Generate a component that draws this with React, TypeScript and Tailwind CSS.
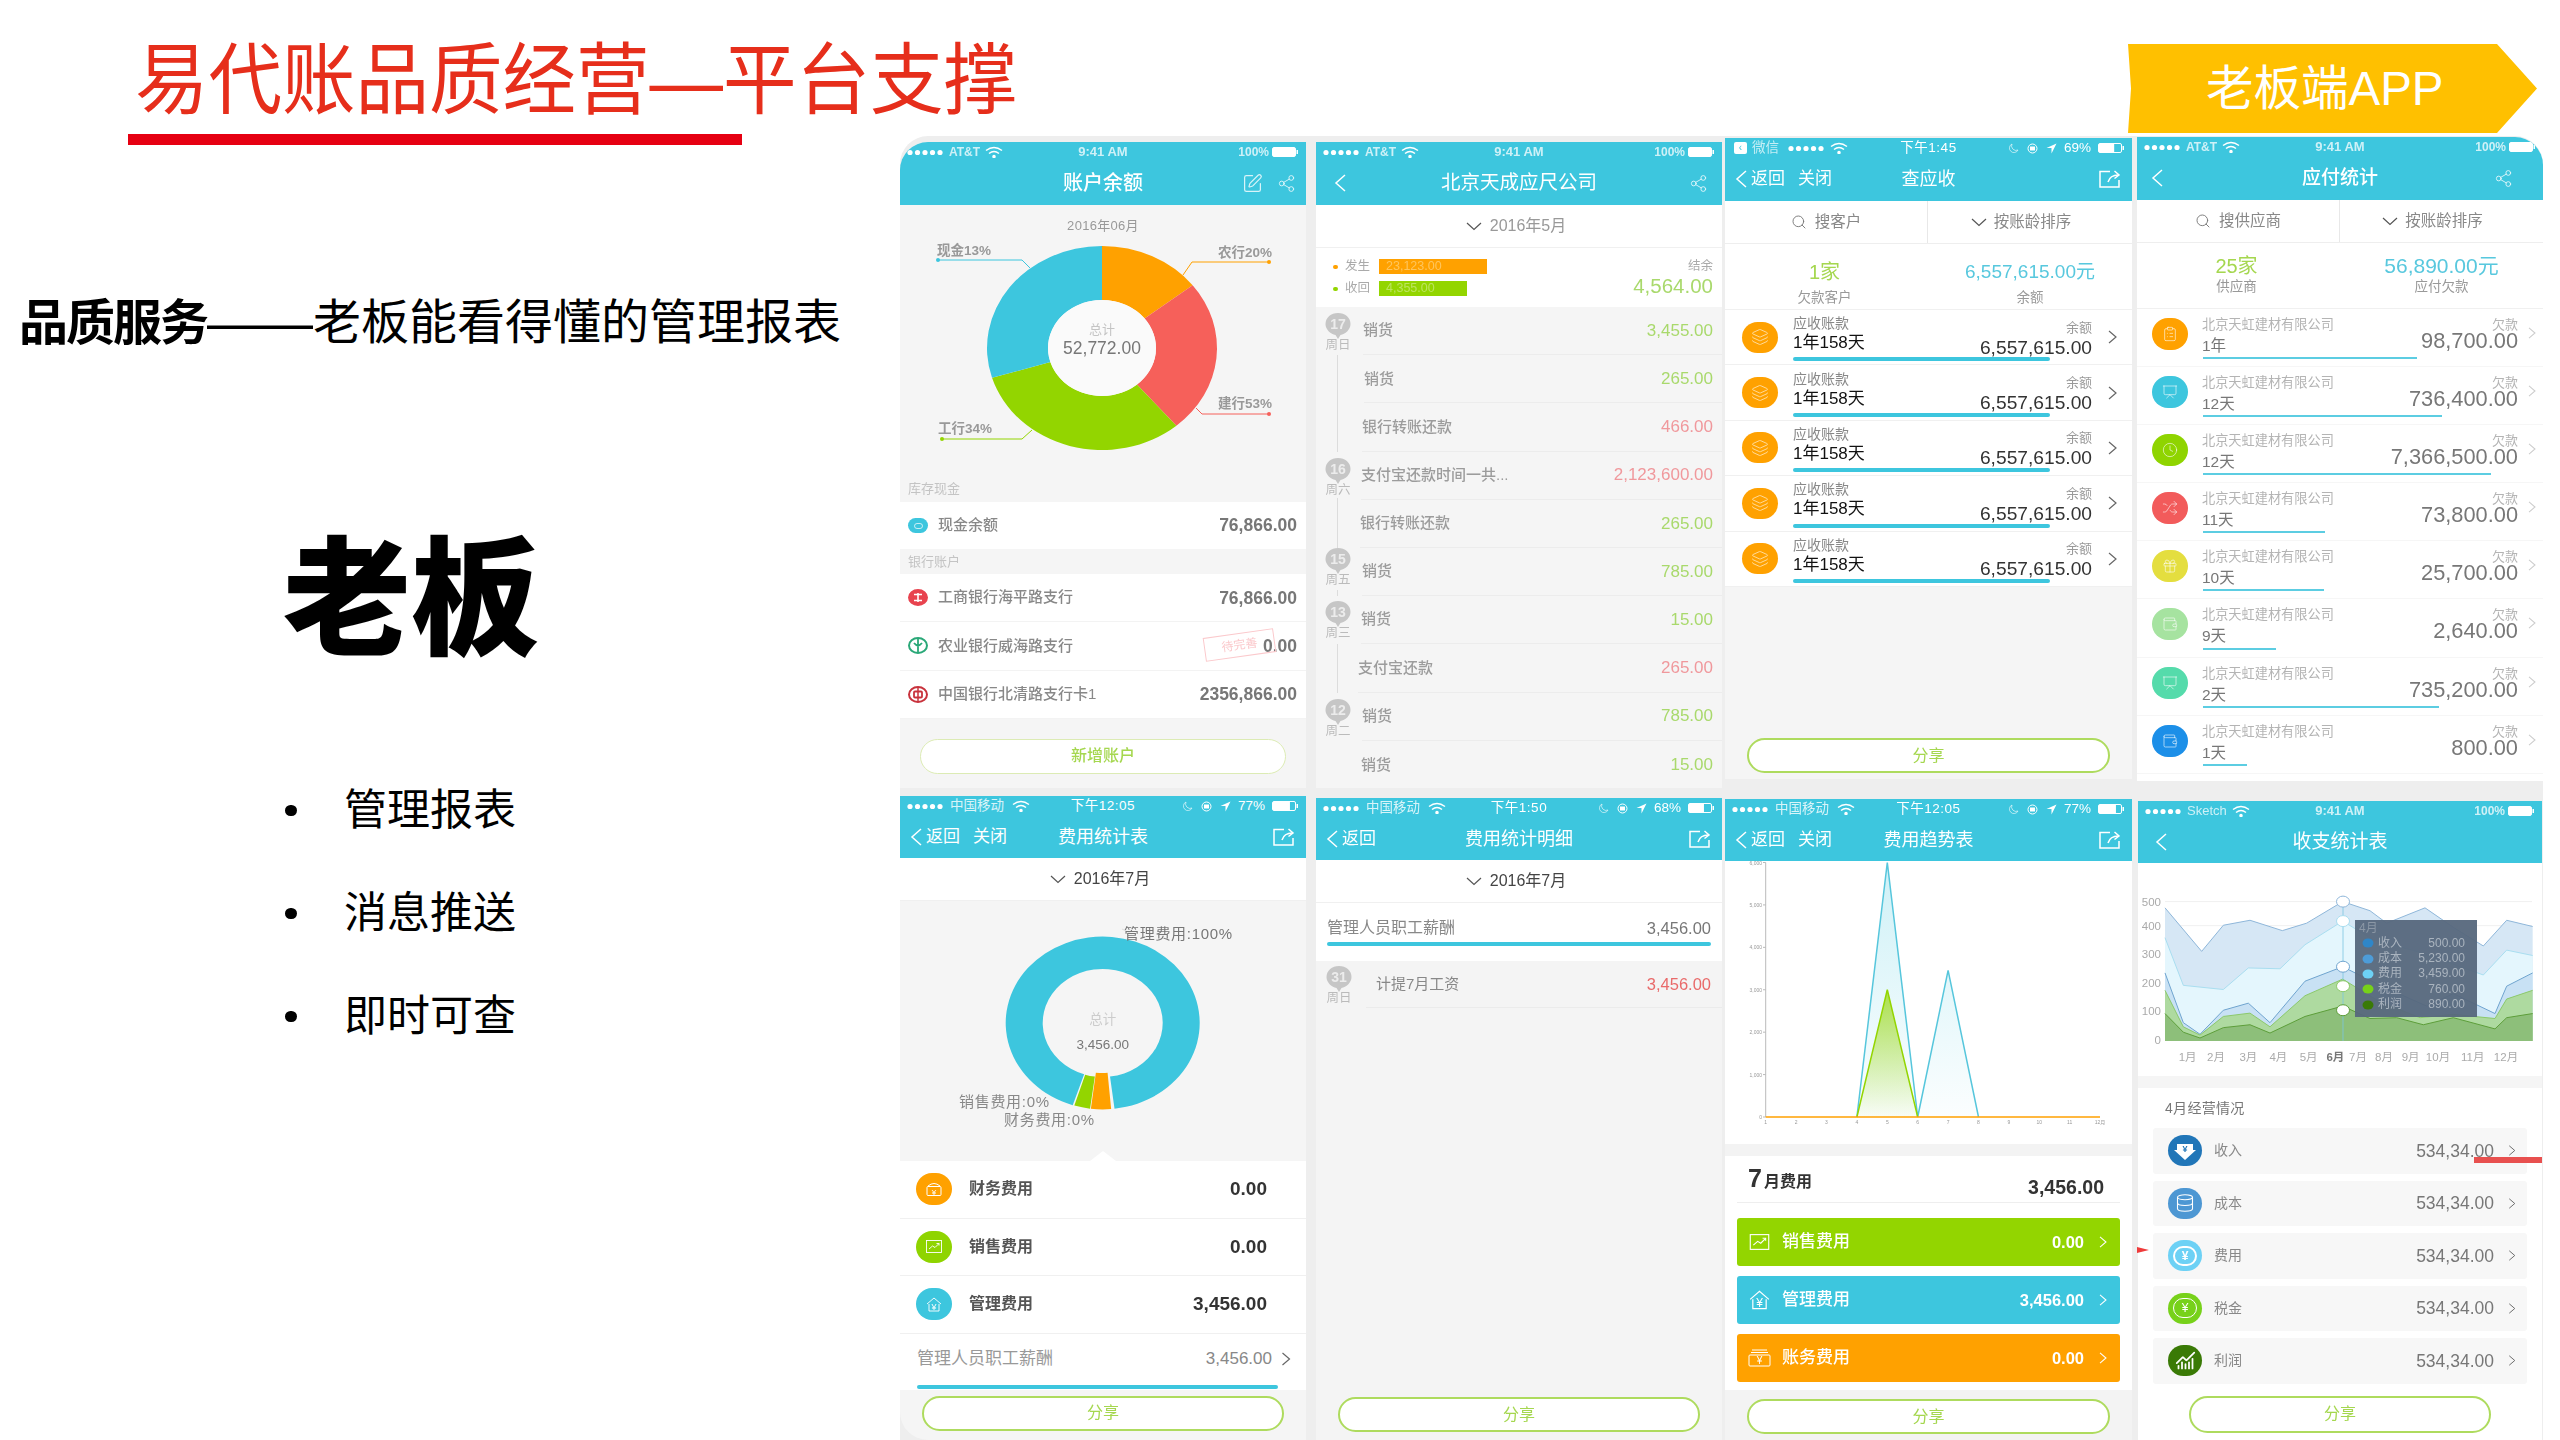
import React from "react";
import { Layers, ClipboardList, Presentation, Clock, Shuffle, Gift, Wallet, Share2, SquarePen, Search, Database, ChartNoAxesCombined } from "lucide-react";

const TEAL = "#3dc6de";

function pt(cx: number, cy: number, rx: number, ry: number, a: number) {
  const r = (a * Math.PI) / 180;
  return [cx + rx * Math.sin(r), cy - ry * Math.cos(r)];
}
function seg(cx: number, cy: number, rx: number, ry: number, ix: number, iy: number, a0: number, a1: number) {
  const l = a1 - a0 > 180 ? 1 : 0;
  const [x0, y0] = pt(cx, cy, rx, ry, a0);
  const [x1, y1] = pt(cx, cy, rx, ry, a1);
  const [x2, y2] = pt(cx, cy, ix, iy, a1);
  const [x3, y3] = pt(cx, cy, ix, iy, a0);
  return `M${x0} ${y0}A${rx} ${ry} 0 ${l} 1 ${x1} ${y1}L${x2} ${y2}A${ix} ${iy} 0 ${l} 0 ${x3} ${y3}Z`;
}

function Dots() {
  return (
    <svg width="37" height="7" viewBox="0 0 37 7" className="shrink-0">
      {[3, 10.5, 18, 25.5, 33].map((x) => (
        <circle key={x} cx={x} cy="3.5" r="2.6" fill="#fff" />
      ))}
    </svg>
  );
}
function Wifi() {
  return (
    <svg width="18" height="12" viewBox="0 0 18 12" fill="none" stroke="#fff" strokeWidth="1.5" className="shrink-0">
      <path d="M1 4.5Q9 -1.5 17 4.5" />
      <path d="M4 7.5Q9 3.5 14 7.5" />
      <circle cx="9" cy="10.5" r="1" fill="#fff" />
    </svg>
  );
}
function Battery({ pct }: { pct: number }) {
  return (
    <svg width="27" height="10" viewBox="0 0 27 10" className="shrink-0">
      <rect x="0.5" y="0.5" width="23" height="9" rx="1.5" fill="none" stroke="#fff" />
      <rect x="1" y="1" width={22 * pct} height="8" fill="#fff" />
      <rect x="24.5" y="3" width="1.5" height="4" fill="#fff" />
    </svg>
  );
}
function CnRight({ pct, bat }: { pct: string; bat: number }) {
  return (
    <div className="flex items-center justify-end gap-[7px]">
      <svg width="10" height="10" viewBox="0 0 10 10" className="shrink-0"><path d="M3 1A4.5 4.5 0 1 0 9 7 4.5 4.5 0 0 1 3 1Z" fill="none" stroke="#ffffff" strokeOpacity="0.6" /></svg>
      <svg width="13" height="11" viewBox="0 0 13 11" fill="none" stroke="#fff" className="shrink-0"><circle cx="6.5" cy="5.5" r="4.5" /><rect x="4.5" y="4" width="4" height="3" fill="#fff" /></svg>
      <svg width="11" height="11" viewBox="0 0 11 11" className="shrink-0"><path d="M10.5 .5L0.5 5H5.5V10.5Z" fill="#fff" /></svg>
      <span>{pct}</span>
      <Battery pct={bat} />
    </div>
  );
}
function Status({ left, time, right, big }: { left: React.ReactNode; time: string; right: React.ReactNode; big?: boolean }) {
  return (
    <div className={`grid h-[20px] grid-cols-[1fr_auto_1fr] items-center px-[7px] text-white ${big ? "text-[13.5px]" : "text-[12px] font-bold text-white/75"}`}>
      <div className="flex items-center gap-[5px]">{left}</div>
      <div className={big ? "tracking-[0.5px]" : "text-[13px]"}>{time}</div>
      {right}
    </div>
  );
}
function AttRight() {
  return (
    <div className="flex items-center justify-end gap-[3px]">
      <span>100%</span>
      <Battery pct={1} />
    </div>
  );
}
function Back() {
  return (
    <svg width="13" height="20" viewBox="0 0 13 20" fill="none" stroke="#fff" strokeWidth="1.5" className="shrink-0">
      <path d="M11 2L2 10L11 18" />
    </svg>
  );
}
function ShareBox() {
  return (
    <svg width="22" height="18" viewBox="0 0 22 18" fill="none" stroke="#fff" strokeWidth="1.5" className="mr-[1px]">
      <path d="M11 1.5H1V17H20V10" />
      <path d="M9 12Q11 5 19.5 5" />
      <path d="M15.5 1L20 5L15.5 8.5" />
    </svg>
  );
}
function Nav({ title, left, right, size, gap }: { title: string; left?: React.ReactNode; right?: React.ReactNode; size?: string; gap?: string }) {
  return (
    <div className={`grid h-[42px] grid-cols-[1fr_auto_1fr] items-center px-[10px] text-white ${size ?? "text-[18px]"}`}>
      <div className="flex items-center text-[17px]">{left}</div>
      <div>{title}</div>
      <div className={`flex items-center justify-end ${gap ?? "gap-[10px]"}`}>{right}</div>
    </div>
  );
}
function BackClose({ close }: { close?: boolean }) {
  return (
    <>
      <Back />
      <span className="ml-[3px]">返回</span>
      {close ? <span className="ml-[13px]">关闭</span> : null}
    </>
  );
}
function Chev({ color = "#777", w = 9, h = 14, sw = 1.2 }: { color?: string; w?: number; h?: number; sw?: number }) {
  return (
    <svg width={w} height={h} viewBox="0 0 9 14" fill="none" stroke={color} strokeWidth={sw} className="shrink-0">
      <path d="M1 1L8 7L1 13" />
    </svg>
  );
}
function ChevDown() {
  return (
    <svg width="16" height="9" viewBox="0 0 16 9" fill="none" stroke="#555" strokeWidth="1.2" className="shrink-0">
      <path d="M1 1L8 7.5L15 1" />
    </svg>
  );
}
function DateRow({ text, cls }: { text: string; cls?: string }) {
  return (
    <div className={`flex h-[43px] shrink-0 items-center justify-center gap-[8px] border-b border-[#f0f0f0] bg-white pr-[6px] text-[16px] ${cls ?? "text-[#444]"}`}>
      <ChevDown />
      <span>{text}</span>
    </div>
  );
}
function ShareBtn({ cls }: { cls: string }) {
  return (
    <div className={`flex h-[35px] items-center justify-center rounded-full border-2 border-[#aedb5e] bg-white text-[16px] text-[#a5d74f] ${cls}`}>分享</div>
  );
}

/* ---------- phone 1 ---------- */
function Bank({ kind }: { kind: number }) {
  const c = kind === 0 ? "#e8434f" : kind === 1 ? "#2aa878" : "#c8323c";
  return (
    <svg width="20" height="17" viewBox="0 0 20 17" className="shrink-0">
      <ellipse cx="10" cy="8.5" rx="9" ry="7.5" fill={kind === 0 ? c : "none"} stroke={c} strokeWidth="2" />
      {kind === 0 ? <path d="M6 5.5H14M6 11.5H14M10 4V13" stroke="#fff" strokeWidth="1.6" /> : null}
      {kind === 1 ? <path d="M10 2V15M6 6Q10 11 14 6" stroke={c} strokeWidth="1.8" fill="none" /> : null}
      {kind === 2 ? <rect x="6" y="5.5" width="8" height="6" rx="1" fill="none" stroke={c} strokeWidth="1.8" /> : null}
      {kind === 2 ? <path d="M10 2V15" stroke={c} strokeWidth="1.5" /> : null}
    </svg>
  );
}
function BankRow({ icon, label, amount, stamp }: { icon: React.ReactNode; label: string; amount: string; stamp?: boolean }) {
  return (
    <div className="relative flex h-[48.3px] items-center border-b border-[#f3f3f3] pl-[8px] pr-[9px]">
      <div className="flex w-[30px] shrink-0">{icon}</div>
      <span className="text-[15px] font-medium text-[#888]">{label}</span>
      <span className="ml-auto text-[17.5px] font-bold text-[#777]">{amount}</span>
      {stamp ? (
        <div className="absolute left-[304px] top-[11px] flex h-[24px] w-[71px] -rotate-[8deg] items-center justify-center border border-[#fbc9cc] text-[12px] text-[#fbc9cc]">待完善</div>
      ) : null}
    </div>
  );
}
function Phone1() {
  const cx = 202;
  const cy = 103;
  const L = "#999";
  return (
    <div className="flex h-[646px] w-[406px] flex-col overflow-hidden rounded-tl-[28px] bg-[#f5f5f5] blur-[0.7px]">
      <div className="h-[63px] shrink-0 bg-[#3dc6de]">
        <Status left={<><Dots /><span>AT&amp;T</span><Wifi /></>} time="9:41 AM" right={<AttRight />} />
        <Nav title="账户余额" size="text-[20px] font-medium" gap="gap-[14px]" right={<><SquarePen size={21} strokeWidth={1.4} color="#ffffffcc" /><Share2 size={19} strokeWidth={1.2} color="#ffffffcc" /></>} />
      </div>
      <div className="flex h-[34px] shrink-0 items-center justify-center pt-[8px] text-[13px] tracking-[0.3px] text-[#999]">2016年06月</div>
      <svg width="406" height="243" viewBox="0 -6 406 243" className="shrink-0">
        <path d={seg(cx, cy, 115, 102, 54, 48, 0, 52)} fill="#ffa100" />
        <path d={seg(cx, cy, 115, 102, 54, 48, 52, 139.7)} fill="#f6605a" />
        <path d={seg(cx, cy, 115, 102, 54, 48, 139.7, 253)} fill="#93d500" />
        <path d={seg(cx, cy, 115, 102, 54, 48, 253, 360)} fill={TEAL} />
        <ellipse cx={cx} cy={cy} rx="54" ry="48" fill="#fafafa" />
        <text x={cx} y="89" textAnchor="middle" fontSize="13" fill="#c4c4c4">总计</text>
        <text x={cx} y="109" textAnchor="middle" fontSize="17.5" fill="#777">52,772.00</text>
        <text x="37" y="10" fontSize="13.5" fill={L} fontWeight="600">现金13%</text>
        <text x="318" y="12" fontSize="13.5" fill={L} fontWeight="600">农行20%</text>
        <text x="318" y="163" fontSize="13.5" fill={L} fontWeight="600">建行53%</text>
        <text x="38" y="188" fontSize="13.5" fill={L} fontWeight="600">工行34%</text>
        <path d="M38 15H122L130 23" fill="none" stroke={TEAL} />
        <circle cx="38" cy="15" r="2" fill={TEAL} />
        <path d="M369 17H292L283 30" fill="none" stroke="#ffa100" />
        <circle cx="369" cy="17" r="2" fill="#ffa100" />
        <path d="M369 169H302L296 163" fill="none" stroke="#f6605a" />
        <circle cx="369" cy="169" r="2" fill="#f6605a" />
        <path d="M42 194H122L132 185" fill="none" stroke="#93d500" />
        <circle cx="42" cy="194" r="2" fill="#93d500" />
      </svg>
      <div className="flex h-[20px] shrink-0 items-start pl-[8px] text-[13px] leading-[13px] text-[#c4c4c4]">库存现金</div>
      <div className="flex h-[47px] shrink-0 items-center bg-white pl-[8px] pr-[9px]">
        <div className="flex w-[30px] shrink-0"><div className="flex h-[15px] w-[20px] items-center justify-center rounded-full bg-[#3dc6de]"><div className="h-[6px] w-[9px] rounded-full border border-white/70" /></div></div>
        <span className="text-[15px] font-medium text-[#888]">现金余额</span>
        <span className="ml-auto text-[17.5px] font-bold text-[#777]">76,866.00</span>
      </div>
      <div className="flex h-[25px] shrink-0 items-center pl-[8px] text-[13px] text-[#c4c4c4]">银行账户</div>
      <div className="shrink-0 bg-white">
        <BankRow icon={<Bank kind={0} />} label="工商银行海平路支行" amount="76,866.00" />
        <BankRow icon={<Bank kind={1} />} label="农业银行威海路支行" amount="0.00" stamp />
        <BankRow icon={<Bank kind={2} />} label="中国银行北清路支行卡1" amount="2356,866.00" />
      </div>
      <div className="ml-[20px] mt-[20px] flex h-[35px] w-[366px] items-center justify-center rounded-full border border-[#dcebb4] bg-white text-[16px] font-medium text-[#a5d74f]">新增账户</div>
    </div>
  );
}

/* ---------- phone 2 ---------- */
function Pin({ n, day, top }: { n: string; day: string; top: string }) {
  return (
    <div className={`absolute left-[9px] flex w-[26px] flex-col items-center ${top}`}>
      <svg width="26" height="28" viewBox="0 0 26 28">
        <path d="M13 1C20 1 25.5 5.5 25.5 12C25.5 18 20 22 15.5 23L13 27L10.5 23C6 22 0.5 18 0.5 12C0.5 5.5 6 1 13 1Z" fill="#c6c6c6" />
        <text x="13" y="17" textAnchor="middle" fontSize="14" fontWeight="700" fill="#ececec">{n}</text>
      </svg>
      <span className="-mt-[2px] text-[12.5px] leading-[14px] text-[#bbb]">{day}</span>
    </div>
  );
}
const G2 = "text-[#a9d96c]";
const R2 = "text-[#f0989c]";
const rows2: { t: string; a: string; c: string; pin?: [string, string]; top?: string; line?: string; pl: string }[] = [
  { t: "销货", a: "3,455.00", c: G2, pin: ["17", "周日"], top: "top-[5px]", line: "top-[48px] h-[2px]", pl: "pl-[47px]" },
  { t: "销货", a: "265.00", c: G2, line: "top-0 h-full", pl: "pl-[48px]" },
  { t: "银行转账还款", a: "466.00", c: R2, line: "top-0 h-full", pl: "pl-[46px]" },
  { t: "支付宝还款时间一共...", a: "2,123,600.00", c: R2, pin: ["16", "周六"], top: "top-[5px]", line: "top-[46px] h-[3px]", pl: "pl-[45px]" },
  { t: "银行转账还款", a: "265.00", c: G2, line: "top-0 h-full", pl: "pl-[44px]" },
  { t: "销货", a: "785.00", c: G2, pin: ["15", "周五"], top: "-top-[1px]", line: "top-[42px] h-[6px]", pl: "pl-[46px]" },
  { t: "销货", a: "15.00", c: G2, pin: ["13", "周三"], top: "top-[4px]", pl: "pl-[45px]" },
  { t: "支付宝还款", a: "265.00", c: R2, line: "top-0 h-full", pl: "pl-[42px]" },
  { t: "销货", a: "785.00", c: G2, pin: ["12", "周二"], top: "top-[5px]", pl: "pl-[46px]" },
  { t: "销货", a: "15.00", c: G2, pl: "pl-[45px]" },
];
function Phone2() {
  return (
    <div className="ml-[10px] flex h-[646px] w-[406px] flex-col overflow-hidden bg-[#f5f5f5] blur-[0.7px]">
      <div className="h-[63px] shrink-0 bg-[#3dc6de]">
        <Status left={<><Dots /><span>AT&amp;T</span><Wifi /></>} time="9:41 AM" right={<AttRight />} />
        <Nav title="北京天成应尺公司" size="text-[19.5px]" left={<div className="ml-[8px]"><Back /></div>} right={<div className="mr-[4px] flex"><Share2 size={19} strokeWidth={1.2} color="#ffffffcc" /></div>} />
      </div>
      <DateRow text="2016年5月" cls="text-[#999]" />
      <div className="flex h-[59px] shrink-0 items-center justify-between bg-white pl-[17px] pr-[9px]">
        <div className="flex flex-col gap-[7px] text-[12.5px] leading-[15px] text-[#aaa]">
          {[
            { l: "发生", v: "23,123.00", b: "w-[108px] bg-[#ffa100] text-[#ffc55c]", d: "bg-[#ffa100]" },
            { l: "收回", v: "4,355.00", b: "w-[88px] bg-[#93d500] text-[#bce45f]", d: "bg-[#93d500]" },
          ].map((r) => (
            <div key={r.l} className="flex items-center">
              <div className={`h-[4px] w-[5px] rounded-full ${r.d}`} />
              <span className="ml-[7px] w-[34px]">{r.l}</span>
              <div className={`h-[15px] pl-[7px] text-[12.5px] leading-[15px] ${r.b}`}>{r.v}</div>
            </div>
          ))}
        </div>
        <div className="flex flex-col items-end">
          <span className="text-[12.5px] leading-[16px] text-[#aaa]">结余</span>
          <span className="text-[20.5px] leading-[24px] text-[#a9d96c]">4,564.00</span>
        </div>
      </div>
      <div className="flex-1">
        {rows2.map((r, i) => (
          <div key={i} className={`relative h-[48.2px] ${r.pl}`}>
            {r.line ? <div className={`absolute left-[21px] w-px bg-[#dcdcdc] ${r.line}`} /> : null}
            {r.pin ? <Pin n={r.pin[0]} day={r.pin[1]} top={r.top ?? ""} /> : null}
            <div className={`flex h-full items-center justify-between border-b border-[#ececec] pr-[9px] ${i === rows2.length - 1 ? "border-b-0" : ""}`}>
              <span className="text-[15px] font-medium text-[#9c9c9c]">{r.t}</span>
              <span className={`text-[17px] ${r.c}`}>{r.a}</span>
            </div>
          </div>
        ))}
      </div>
    </div>
  );
}

/* ---------- search + summary rows ---------- */
function SearchRow({ s }: { s: string }) {
  return (
    <div className="flex h-[43px] shrink-0 border-b border-[#eee] bg-white text-[15.5px] text-[#888]">
      <div className="flex w-[203px] items-center justify-center gap-[8px] border-r border-[#e8e8e8]">
        <Search size={16} strokeWidth={1.4} color="#777" />
        <span>{s}</span>
      </div>
      <div className="flex flex-1 items-center justify-center gap-[7px] pr-[18px]">
        <ChevDown />
        <span>按账龄排序</span>
      </div>
    </div>
  );
}
function Summary({ a, b, la, lb, pad, gap, size }: { a: string; b: string; la: string; lb: string; pad: string; gap: string; size?: string }) {
  return (
    <div className={`grid h-[66px] shrink-0 grid-cols-[203px_1fr] items-start border-b border-[#f0f0f0] bg-white ${pad}`}>
      <div className="flex flex-col items-center pr-[4px]">
        <span className="text-[20px] leading-[26px] text-[#a5d74f]">{a}</span>
        <span className={`text-[13.5px] leading-[16px] text-[#999] ${gap}`}>{la}</span>
      </div>
      <div className="flex flex-col items-center">
        <span className={`${size ?? "text-[19px]"} leading-[26px] text-[#58c8de]`}>{b}</span>
        <span className={`text-[13.5px] leading-[16px] text-[#999] ${gap}`}>{lb}</span>
      </div>
    </div>
  );
}

/* ---------- phone 3 ---------- */
function Phone3() {
  return (
    <div className="ml-[3px] -mt-[4px] flex h-[641px] w-[407px] flex-col overflow-hidden bg-[#f5f5f5] blur-[0.4px]">
      <div className="h-[63px] shrink-0 bg-[#3dc6de]">
        <Status
          big
          left={<><div className="ml-[2px] flex h-[12px] w-[13px] items-center justify-center rounded-[2px] bg-white text-[10px] leading-none text-[#3dc6de]">‹</div><span className="text-white/70">微信</span><div className="ml-[4px]"><Dots /></div><Wifi /></>}
          time="下午1:45"
          right={<CnRight pct="69%" bat={0.69} />}
        />
        <Nav title="查应收" left={<BackClose close />} right={<ShareBox />} />
      </div>
      <SearchRow s="搜客户" />
      <Summary a="1家" b="6,557,615.00元" la="欠款客户" lb="余额" pad="pt-[15px]" gap="mt-[5px]" />
      {[0, 1, 2, 3, 4].map((i) => (
        <div key={i} className="relative h-[55.4px] shrink-0 border-b border-[#f0f0f0] bg-white">
          <div className="flex h-full items-center pl-[17px] pr-[15px]">
            <div className="flex h-[31px] w-[36px] shrink-0 items-center justify-center rounded-full bg-[#ffa100]"><Layers size={18} strokeWidth={1.2} color="#ffe0a8" /></div>
            <div className="ml-[15px] flex flex-col pb-[7px]">
              <span className="text-[14px] leading-[19px] text-[#888]">应收账款</span>
              <span className="text-[17px] leading-[20px] text-[#111]">1年158天</span>
            </div>
            <div className="ml-auto flex flex-col items-end pr-[16px] pt-[2px]">
              <span className="text-[13px] leading-[18px] text-[#999]">余额</span>
              <span className="text-[19.2px] leading-[21px] text-[#333]">6,557,615.00</span>
            </div>
            <Chev color="#666" />
          </div>
          <div className="absolute bottom-[3px] left-[68px] h-[4px] w-[257px] rounded-full bg-[#3dc6de]" />
        </div>
      ))}
      <div className="mt-auto flex flex-col">
        <ShareBtn cls="mx-[22px] mb-[6px]" />
      </div>
    </div>
  );
}

/* ---------- phone 4 ---------- */
const rows4 = [
  { c: "bg-[#ffa100]", I: ClipboardList, d: "1年", a: "98,700.00", w: "w-[214px]" },
  { c: "bg-[#3dc6de]", I: Presentation, d: "12天", a: "736,400.00", w: "w-[239px]" },
  { c: "bg-[#8fd400]", I: Clock, d: "12天", a: "7,366,500.00", w: "w-[288px]" },
  { c: "bg-[#f25b5b]", I: Shuffle, d: "11天", a: "73,800.00", w: "w-[122px]" },
  { c: "bg-[#e4de3f]", I: Gift, d: "10天", a: "25,700.00", w: "w-[121px]" },
  { c: "bg-[#a6e3a0]", I: Wallet, d: "9天", a: "2,640.00", w: "w-[73px]" },
  { c: "bg-[#55dbab]", I: Presentation, d: "2天", a: "735,200.00", w: "w-[236px]" },
  { c: "bg-[#1c8fe8]", I: Wallet, d: "1天", a: "800.00", w: "w-[44px]" },
];
function Phone4() {
  return (
    <div className="ml-[5px] -mt-[5px] flex h-[644px] w-[406px] flex-col overflow-hidden rounded-tr-[28px] bg-white blur-[0.7px]">
      <div className="h-[63px] shrink-0 bg-[#3dc6de]">
        <Status left={<><Dots /><span>AT&amp;T</span><Wifi /></>} time="9:41 AM" right={<AttRight />} />
        <Nav title="应付统计" size="text-[19px] font-medium" left={<div className="ml-[4px]"><Back /></div>} right={<div className="mr-[20px] flex"><Share2 size={19} strokeWidth={1.2} color="#ffffffcc" /></div>} />
      </div>
      <SearchRow s="搜供应商" />
      <Summary a="25家" b="56,890.00元" la="供应商" lb="应付欠款" pad="pt-[10px]" gap="mt-0" size="text-[21px]" />
      {rows4.map((r) => (
        <div key={r.a} className="relative h-[58.1px] shrink-0 border-b border-[#f6f6f6]">
          <div className={`absolute left-[15px] top-[9px] flex h-[32px] w-[36px] items-center justify-center rounded-full ${r.c}`}><r.I size={16} strokeWidth={1.3} color="#ffffffb0" /></div>
          <div className="flex h-full pl-[65px] pr-[7px] pt-[7px]">
            <div className="flex flex-col">
              <span className="text-[13.2px] leading-[17px] text-[#b4b4b4]">北京天虹建材有限公司</span>
              <span className="mt-[3px] text-[15.5px] leading-[19px] text-[#777]">{r.d}</span>
            </div>
            <div className="ml-auto flex flex-col items-end pr-[10px]">
              <span className="text-[13px] leading-[17px] text-[#b4b4b4]">欠款</span>
              <span className="text-[21.8px] leading-[16px] text-[#777]">{r.a}</span>
            </div>
            <div className="pt-[11px]"><Chev color="#ccc" w={8} h={12} /></div>
          </div>
          <div className={`absolute bottom-[7px] left-[66px] h-[2px] bg-[#5ccde2] ${r.w}`} />
        </div>
      ))}
    </div>
  );
}

/* ---------- phone 5 ---------- */
function CoinIcon({ c, children }: { c: string; children: React.ReactNode }) {
  return <div className={`flex h-[32px] w-[36px] shrink-0 items-center justify-center rounded-full ${c}`}>{children}</div>;
}
function BoxIcon() {
  return (
    <svg width="16" height="14" viewBox="0 0 16 14" fill="none" stroke="#fff"><path d="M2 4Q8 -1 14 4" /><rect x="1" y="4.5" width="14" height="9" rx="1" /><text x="8" y="12.5" textAnchor="middle" fontSize="8" fill="#fff" stroke="none">¥</text></svg>
  );
}
function TrendIcon({ w = 16, h = 13 }: { w?: number; h?: number }) {
  return (
    <svg width={w} height={h} viewBox="0 0 16 13" fill="none" stroke="#fff" strokeWidth="0.9"><rect x="0.5" y="0.5" width="15" height="12" /><path d="M3 9L6.5 6L9 7.5L13 3.5" /><path d="M10.5 3.5H13V5.5" /></svg>
  );
}
function HouseIcon({ w = 16, h = 15 }: { w?: number; h?: number }) {
  return (
    <svg width={w} height={h} viewBox="0 0 16 15" fill="none" stroke="#fff" strokeWidth="0.9"><path d="M1 7L8 1L15 7" /><path d="M3 7V14H13V7" /><text x="8" y="12.5" textAnchor="middle" fontSize="9" fill="#fff" stroke="none">¥</text></svg>
  );
}
function Phone5() {
  const cx = 202.7;
  const cy = 122;
  const R = [97, 86.4, 60, 54] as const;
  return (
    <div className="flex h-[644px] w-[406px] flex-col overflow-hidden rounded-bl-[28px] bg-[#f5f5f5] blur-[0.25px]">
      <div className="h-[62px] shrink-0 bg-[#3dc6de]">
        <Status big left={<><Dots /><span className="ml-[1px] text-white/80">中国移动</span><div className="ml-[3px]"><Wifi /></div></>} time="下午12:05" right={<CnRight pct="77%" bat={0.77} />} />
        <Nav title="费用统计表" left={<BackClose close />} right={<ShareBox />} />
      </div>
      <DateRow text="2016年7月" />
      <div className="relative h-[260px] shrink-0">
        <svg width="406" height="260" viewBox="0 0 406 260">
          <path d={seg(cx, cy, R[0], R[1], R[2], R[3], -162, 173)} fill={TEAL} />
          <path d={seg(cx, cy, R[0], R[1], R[2], R[3], 187.5, 197)} fill="#93d500" />
          <path d={seg(cx, cy, R[0], R[1], 56, 50, 175, 187)} fill="#ffa100" />
          <path d="M232 33L222 28" stroke="#ddd" fill="none" />
          <text x="224" y="38" fontSize="15" letterSpacing="0.7" fill="#777">管理费用:100%</text>
          <text x="59" y="206" fontSize="15" letterSpacing="0.7" fill="#888">销售费用:0%</text>
          <text x="104" y="224" fontSize="15" letterSpacing="0.7" fill="#888">财务费用:0%</text>
          <text x={cx} y="123" textAnchor="middle" fontSize="13.5" fill="#ccc">总计</text>
          <text x={cx} y="148" textAnchor="middle" fontSize="13.5" fill="#777">3,456.00</text>
          <path d="M190 260L203 250L216 260Z" fill="#fff" />
        </svg>
      </div>
      {[
        { c: "bg-[#ffa100]", t: "财务费用", a: "0.00", i: <BoxIcon /> },
        { c: "bg-[#8fd400]", t: "销售费用", a: "0.00", i: <TrendIcon /> },
        { c: "bg-[#3dc6de]", t: "管理费用", a: "3,456.00", i: <HouseIcon /> },
      ].map((r) => (
        <div key={r.t} className="flex h-[57.5px] shrink-0 items-center border-b border-[#f0f0f0] bg-white pl-[16px] pr-[39px]">
          <CoinIcon c={r.c}>{r.i}</CoinIcon>
          <span className="ml-[17px] text-[16px] font-bold text-[#555]">{r.t}</span>
          <span className="ml-auto text-[19px] font-bold text-[#333]">{r.a}</span>
        </div>
      ))}
      <div className="relative flex h-[56px] shrink-0 items-center bg-white pl-[17px] pr-[15px] pb-[5px]">
        <span className="text-[17px] text-[#999]">管理人员职工薪酬</span>
        <span className="ml-auto mr-[9px] text-[17px] text-[#888]">3,456.00</span>
        <Chev color="#666" w={10} h={14} />
        <div className="absolute bottom-[1px] left-[17px] h-[4px] w-[361px] rounded-full bg-[#3dc6de]" />
      </div>
      <ShareBtn cls="mx-[22px] mt-[6px]" />
    </div>
  );
}

/* ---------- phone 6 ---------- */
function Phone6() {
  return (
    <div className="ml-[10px] mt-[2px] flex h-[642px] w-[406px] flex-col overflow-hidden bg-[#f4f4f4] blur-[0.25px]">
      <div className="h-[62px] shrink-0 bg-[#3dc6de]">
        <Status big left={<><Dots /><span className="ml-[1px] text-white/80">中国移动</span><div className="ml-[3px]"><Wifi /></div></>} time="下午1:50" right={<CnRight pct="68%" bat={0.68} />} />
        <Nav title="费用统计明细" left={<BackClose />} right={<ShareBox />} />
      </div>
      <DateRow text="2016年7月" />
      <div className="flex h-[58px] shrink-0 flex-col bg-white px-[11px] pt-[14px]">
        <div className="flex items-center justify-between">
          <span className="text-[16px] leading-[22px] text-[#888]">管理人员职工薪酬</span>
          <span className="text-[16.5px] leading-[22px] text-[#777]">3,456.00</span>
        </div>
        <div className="mt-[3px] h-[4px] rounded-full bg-[#3dc6de]" />
      </div>
      <div className="relative h-[47px] shrink-0 pl-[50px]">
        <div className="absolute left-[1px] top-[-2px] w-[26px]"><Pin n="31" day="周日" top="top-[6px]" /></div>
        <div className="flex h-full items-center justify-between border-b border-[#ebebeb] pl-[10px] pr-[11px]">
          <span className="text-[15px] text-[#888]">计提7月工资</span>
          <span className="text-[16.5px] text-[#e96a6a]">3,456.00</span>
        </div>
      </div>
      <ShareBtn cls="mx-[22px] mt-auto mb-[8px]" />
    </div>
  );
}

/* ---------- phone 7 ---------- */
function Trend() {
  const X = (i: number) => 40.7 + (i - 1) * 30.4;
  const Y = (v: number) => 256 - (v / 6000) * 254.5;
  const blue = `${X(4)},${Y(0)} ${X(5)},${Y(6000)} ${X(6)},${Y(0)} ${X(7)},${Y(3456)} ${X(8)},${Y(0)}`;
  const green = `${X(4)},${Y(0)} ${X(5)},${Y(3000)} ${X(6)},${Y(0)}`;
  return (
    <svg width="407" height="283" viewBox="0 0 407 283" className="shrink-0 bg-white">
      <defs>
        <linearGradient id="gb" x1="0" y1="0" x2="0" y2="1"><stop offset="0" stopColor="#3dc6de" stopOpacity="0.25" /><stop offset="1" stopColor="#3dc6de" stopOpacity="0.02" /></linearGradient>
        <linearGradient id="gg" x1="0" y1="0" x2="0" y2="1"><stop offset="0" stopColor="#93d500" stopOpacity="0.7" /><stop offset="1" stopColor="#93d500" stopOpacity="0.03" /></linearGradient>
      </defs>
      <path d="M40.7 1.5V256" stroke="#bbb" />
      {[0, 1000, 2000, 3000, 4000, 5000, 6000].map((v) => (
        <g key={v}>
          <path d={`M38 ${Y(v)}H40.7`} stroke="#bbb" />
          <text x="37" y={Y(v) + 2} textAnchor="end" fontSize="5" fill="#999">{v === 0 ? "0" : v.toLocaleString("en-US")}</text>
        </g>
      ))}
      {Array.from({ length: 12 }, (_, k) => (
        <text key={k} x={X(k + 1)} y="263" textAnchor="middle" fontSize="5" fill="#999">{k === 11 ? "12月" : k + 1}</text>
      ))}
      <polygon points={blue} fill="url(#gb)" />
      <polyline points={blue} fill="none" stroke="#56c6dc" strokeWidth="1.5" />
      <polygon points={green} fill="url(#gg)" />
      <polyline points={green} fill="none" stroke="#93d500" strokeWidth="1.5" />
      <path d="M40.7 256H375" stroke="#ffa100" strokeWidth="1.4" />
    </svg>
  );
}
function Phone7() {
  return (
    <div className="ml-[3px] mt-[3px] flex h-[641px] w-[407px] flex-col overflow-hidden bg-[#f3f3f3] blur-[0.25px]">
      <div className="h-[62px] shrink-0 bg-[#3dc6de]">
        <Status big left={<><Dots /><span className="ml-[1px] text-white/80">中国移动</span><div className="ml-[3px]"><Wifi /></div></>} time="下午12:05" right={<CnRight pct="77%" bat={0.77} />} />
        <Nav title="费用趋势表" left={<BackClose close />} right={<ShareBox />} />
      </div>
      <Trend />
      <div className="mt-[12px] flex h-[234px] shrink-0 flex-col bg-white px-[12px]">
        <div className="flex h-[47px] shrink-0 items-end justify-between border-b border-[#eee] pl-[11px] pr-[16px]">
          <div className="mb-[8px] font-bold text-[#333]"><span className="text-[25px] leading-[24px]">7</span><span className="ml-[2px] text-[16px]">月费用</span></div>
          <span className="text-[19.5px] font-bold text-[#333]">3,456.00</span>
        </div>
        <div className="mt-[15px] flex flex-col gap-[10px]">
          {[
            { c: "bg-[#93d500]", t: "销售费用", a: "0.00", i: <TrendIcon w={23} h={16} /> },
            { c: "bg-[#3dc6de]", t: "管理费用", a: "3,456.00", i: <HouseIcon w={23} h={20} /> },
            { c: "bg-[#ffa100]", t: "账务费用", a: "0.00", i: <svg width="23" height="18" viewBox="0 0 23 18" fill="none" stroke="#fff"><path d="M4 1H19M3 3.5H20" /><rect x="1" y="6" width="21" height="11" rx="1" /><text x="11.5" y="15" textAnchor="middle" fontSize="10" fill="#fff" stroke="none">¥</text></svg> },
          ].map((r) => (
            <div key={r.t} className={`flex h-[48px] items-center rounded-[3px] pl-[11px] pr-[13px] text-white ${r.c}`}>
              <div className="flex w-[23px] justify-center">{r.i}</div>
              <span className="ml-[11px] text-[17px] font-medium">{r.t}</span>
              <span className="ml-auto mr-[15px] text-[16.5px] font-bold">{r.a}</span>
              <Chev color="#fff" w={8} h={12} />
            </div>
          ))}
        </div>
      </div>
      <ShareBtn cls="mx-[22px] mt-[9px]" />
    </div>
  );
}

/* ---------- phone 8 ---------- */
const P = (a: number[][]) => a.map(([x, y]) => [x / 3 - 18, y / 2.412 - 72.5]);
const BASE = 604 / 2.412 - 72.5;
const S8 = [
  { s: "#8fb7da", f: "#d6e7f5", p: [[135, 283], [245, 388], [310, 325], [390, 313], [487, 338], [560, 320], [668, 268], [750, 290], [800, 320], [915, 283], [1000, 330], [1090, 375], [1160, 313], [1238, 328]] },
  { s: "#a9def0", f: "#e4f6fd", p: [[135, 355], [190, 470], [310, 480], [385, 428], [480, 430], [555, 372], [668, 315], [760, 360], [900, 390], [1090, 445], [1160, 385], [1238, 398]] },
  { s: "#6fa4cf", f: "#c8e1f4", p: [[135, 440], [190, 560], [240, 588], [310, 530], [385, 513], [450, 560], [555, 460], [668, 425], [780, 470], [920, 520], [1000, 490], [1125, 538], [1160, 472], [1238, 440]] },
  { s: "#8cc96a", f: "#aedaa0", p: [[135, 482], [190, 570], [240, 590], [310, 545], [390, 537], [450, 570], [555, 495], [668, 455], [780, 510], [900, 548], [1000, 540], [1125, 550], [1160, 503], [1238, 482]] },
  { s: "#5d9e3a", f: "#8dbf7a", p: [[135, 538], [190, 583], [240, 597], [310, 572], [390, 565], [450, 585], [555, 545], [668, 520], [750, 550], [830, 548], [910, 565], [1000, 548], [1125, 575], [1160, 548], [1238, 538]] },
];
function Area8() {
  return (
    <div className="relative h-[213.5px] shrink-0 bg-white">
      <svg width="404" height="214" viewBox="0 0 404 214">
        {[268, 326, 395, 464, 533].map((y) => (
          <path key={y} d={`M27 ${y / 2.412 - 72.5}H394`} stroke="#f0f0f0" />
        ))}
        {[["500", 268], ["400", 326], ["300", 395], ["200", 464], ["100", 533], ["0", 602]].map(([t, y]) => (
          <text key={t} x="23" y={Number(y) / 2.412 - 72.5 + 4} textAnchor="end" fontSize="11.5" fill="#aaa">{t}</text>
        ))}
        {S8.map((o, i) => {
          const pts = P(o.p);
          const line = pts.map((q) => q.join(",")).join(" ");
          return (
            <g key={i}>
              <polygon points={`${pts[0][0]},${BASE} ${line} ${pts[pts.length - 1][0]},${BASE}`} fill={o.f} />
              <polyline points={line} fill="none" stroke={o.s} strokeWidth="1" />
            </g>
          );
        })}
        <path d={`M205 ${268 / 2.412 - 72.5}V${BASE}`} stroke="#7cc6e0" strokeWidth="0.8" />
        {[[268, "#8fb7da"], [315, "#a9def0"], [425, "#6fa4cf"], [472, "#8cc96a"], [530, "#5d9e3a"]].map(([y, c]) => (
          <ellipse key={String(y)} cx="205" cy={Number(y) / 2.412 - 72.5} rx="6.5" ry="5.5" fill="#fff" stroke={String(c)} />
        ))}
        {[[203, "1月"], [288, "2月"], [385, "3月"], [475, "4月"], [566, "5月"], [646, "6月"], [714, "7月"], [792, "8月"], [872, "9月"], [954, "10月"], [1058, "11月"], [1158, "12月"]].map(([x, t]) => (
          <text key={String(t)} x={Number(x) / 3 - 18} y="198" textAnchor="middle" fontSize="11.5" fill={t === "6月" ? "#777" : "#aaa"} fontWeight={t === "6月" ? 700 : 400}>{t}</text>
        ))}
      </svg>
      <div className="absolute left-[217px] top-[57px] flex h-[97px] w-[122px] flex-col bg-[#56677c]/95 pl-[4px] pr-[12px] text-[12px] text-[#aab4bf]">
        <span className="text-[12px] leading-[16px] text-[#8b97a5]">4月</span>
        {[["#2f86c8", "收入", "500.00"], ["#4d9cd8", "成本", "5,230.00"], ["#6dd1f5", "费用", "3,459.00"], ["#77d11a", "税金", "760.00"], ["#3a7a06", "利润", "890.00"]].map(([c, l, v]) => (
          <div key={l} className="flex h-[15.4px] items-center leading-[15px]">
            <svg width="12" height="10" viewBox="0 0 12 10" className="ml-[3px] shrink-0"><ellipse cx="6" cy="5" rx="5.5" ry="4.5" fill={c} /></svg>
            <span className="ml-[4px]">{l}</span>
            <span className="ml-auto">{v}</span>
          </div>
        ))}
      </div>
    </div>
  );
}
function Phone8() {
  const rows = [
    { c: "bg-[#2176b8]", t: "收入", i: <svg width="24" height="20" viewBox="0 0 24 20"><path d="M4 3H20V9H23L12 19L1 9H4Z" fill="#fff" /><text x="12" y="11" textAnchor="middle" fontSize="9" fontWeight="700" fill="#2176b8">¥</text></svg> },
    { c: "bg-[#4d97d3]", t: "成本", i: <Database size={20} strokeWidth={1.3} color="#fff" /> },
    { c: "bg-[#6dd1f5]", t: "费用", i: <div className="flex h-[20px] w-[24px] items-center justify-center rounded-full border-2 border-white text-[12px] font-bold leading-none text-white">¥</div> },
    { c: "bg-[#77d11a]", t: "税金", i: <div className="flex h-[20px] w-[24px] items-center justify-center rounded-full border border-white text-[12px] leading-none text-white">¥</div> },
    { c: "bg-[#3a7a06]", t: "利润", i: <ChartNoAxesCombined size={21} strokeWidth={2} color="#fff" /> },
  ];
  return (
    <div className="relative ml-[6px] mt-[5px] h-[639px] w-[404px]">
      <div className="flex h-full flex-col overflow-hidden bg-white blur-[0.35px]">
        <div className="h-[61.5px] shrink-0 bg-[#3dc6de]">
          <Status left={<><Dots /><span className="text-[13px] font-normal">Sketch</span><Wifi /></>} time="9:41 AM" right={<AttRight />} />
          <Nav title="收支统计表" size="text-[19px]" left={<div className="ml-[7px]"><Back /></div>} />
        </div>
        <Area8 />
        <div className="h-[12px] shrink-0 bg-[#f5f5f5]" />
        <div className="flex h-[40px] shrink-0 items-center pl-[27px] text-[14px] tracking-[0.3px] text-[#777]">4月经营情况</div>
        <div className="mx-[15px] flex flex-col gap-[7px]">
          {rows.map((r) => (
            <div key={r.t} className="flex h-[45.5px] items-center rounded-[3px] bg-[#f7f7f7] pl-[15px] pr-[11px]">
              <div className={`flex h-[31px] w-[34px] shrink-0 items-center justify-center rounded-full ${r.c}`}>{r.i}</div>
              <span className="ml-[12px] text-[14px] text-[#888]">{r.t}</span>
              <span className="ml-auto mr-[14px] text-[17.5px] text-[#777]">534,34.00</span>
              <Chev color="#666" w={8} h={11} />
            </div>
          ))}
        </div>
        <ShareBtn cls="mx-[51px] mt-[12px] h-[37px]" />
      </div>
      <div className="absolute left-[336px] top-[356px] h-[6px] w-[68px] bg-[#e8504f]" />
      <svg width="12" height="6" viewBox="0 0 12 6" className="absolute -left-px top-[446px]"><path d="M0 0L12 3L0 6Z" fill="#ef3b3b" /></svg>
    </div>
  );
}

export default function App() {
  return (
    <div className="flex h-[1440px] w-[2560px] flex-col overflow-hidden bg-white font-['Liberation_Sans','Noto_Sans_CJK_SC',sans-serif] text-black">
      <div className="flex h-[145px] shrink-0 items-start justify-between">
        <div className="flex flex-col">
          <div className="ml-[135px] mt-[38px] origin-top scale-y-[1.07] whitespace-nowrap text-[73.5px] leading-[80px] text-[#e62e1b]">易代账品质经营—平台支撑</div>
          <div className="ml-[128px] mt-[16px] h-[11px] w-[614px] bg-[#e60012]" />
        </div>
        <div className="mr-[23px] mt-[44px] flex h-[89px] w-[409px] items-center bg-[#ffc000] pl-[78px] text-[47.5px] leading-none text-white [clip-path:polygon(0_0,369px_0,409px_50%,369px_100%,0_100%,3px_50%)]">老板端APP</div>
      </div>
      <div className="-mt-[9px] flex flex-1">
        <div className="flex w-[900px] shrink-0 flex-col">
          <div className="ml-[19px] mt-[159px] flex items-center whitespace-nowrap leading-[56px]">
            <span className="text-[49px] font-bold tracking-[-2px]">品质服务</span>
            <span className="text-[53px]">——</span>
            <span className="text-[48px]">老板能看得懂的管理报表</span>
          </div>
          <div className="ml-[283px] mt-[175px] text-[128px] font-black leading-[150px]">老板</div>
          <div className="ml-[285px] mt-[83px] flex flex-col text-[43px]">
            {["管理报表", "消息推送", "即时可查"].map((t) => (
              <div key={t} className="flex h-[103px] items-center">
                <div className="h-[11px] w-[12px] rounded-full bg-black" />
                <span className="ml-[47px]">{t}</span>
              </div>
            ))}
          </div>
        </div>
        <div className="w-[1643px] shrink-0 rounded-t-[28px] bg-[#eeeeee]">
          <div className="flex h-[660px] items-start pt-[6px]">
            <Phone1 />
            <Phone2 />
            <Phone3 />
            <Phone4 />
          </div>
          <div className="flex items-start">
            <Phone5 />
            <Phone6 />
            <Phone7 />
            <Phone8 />
          </div>
        </div>
      </div>
    </div>
  );
}
